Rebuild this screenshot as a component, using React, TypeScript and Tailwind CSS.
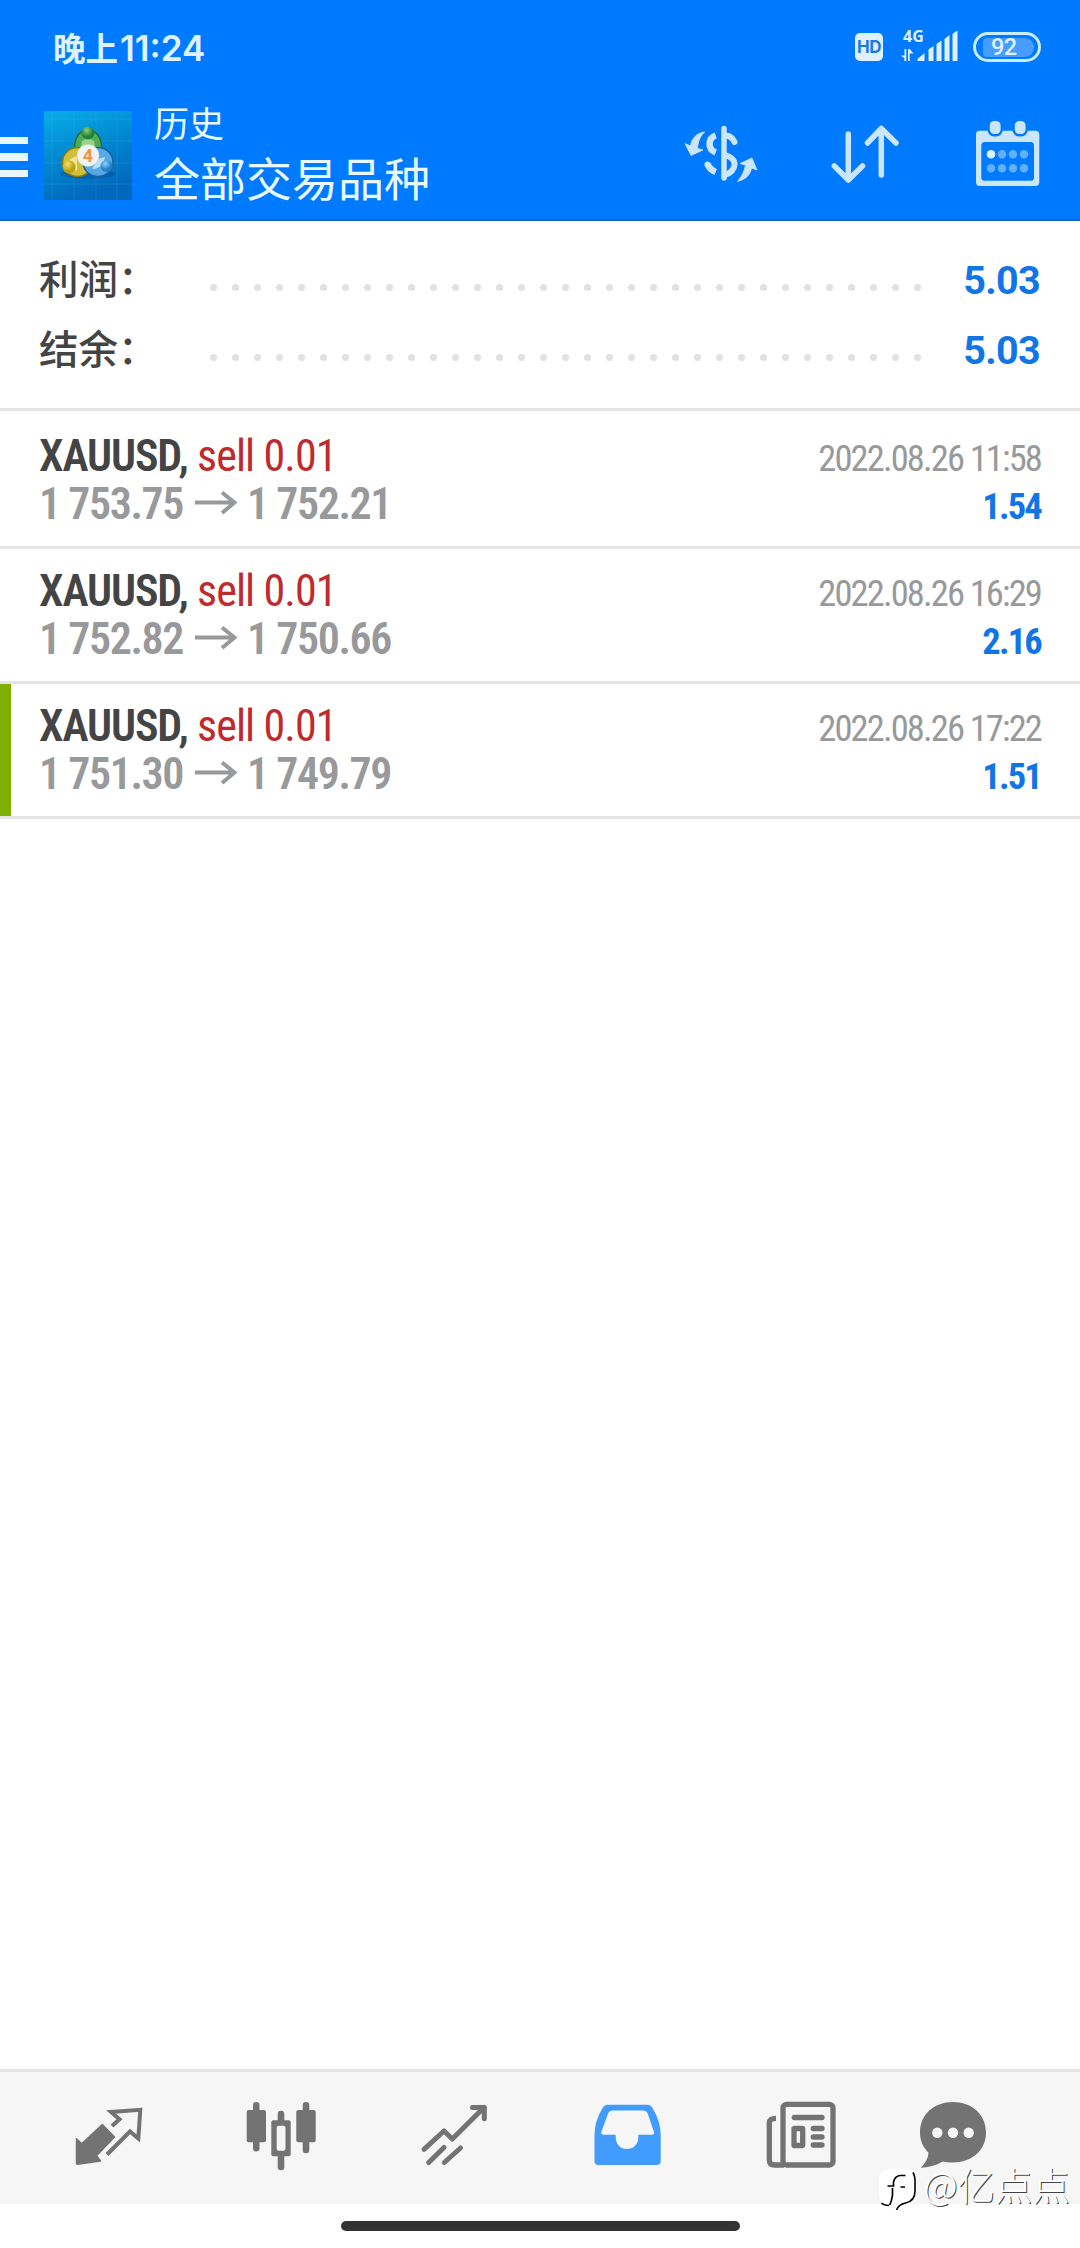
const trades = [
  { symbol: "XAUUSD,", side: "sell 0.01", from: "1 753.75", to: "1 752.21", time: "2022.08.26 11:58", profit: "1.54", marked: false },
  { symbol: "XAUUSD,", side: "sell 0.01", from: "1 752.82", to: "1 750.66", time: "2022.08.26 16:29", profit: "2.16", marked: false },
  { symbol: "XAUUSD,", side: "sell 0.01", from: "1 751.30", to: "1 749.79", time: "2022.08.26 17:22", profit: "1.51", marked: true },
];

const summary = [
  { label: "利润：", value: "5.03" },
  { label: "结余：", value: "5.03" },
];

function StatusBar() {
  return (
    <div className="flex h-[96px] items-start pl-[53px] pr-[39px] text-[#def1ff]">
      <div className="mt-[23px] flex h-[48px] items-baseline leading-[48px]">
        <span className="font-['Noto_Sans_CJK_SC',sans-serif] text-[32.500px] font-bold">晚上</span>
        <span className="ml-[2px] font-['Inter',sans-serif] text-[35px] font-semibold">11:24</span>
      </div>
      <div className="ml-auto mt-[32.500px] flex h-[28px] w-[28px] items-center justify-center rounded-[5px] bg-[#dff1ff] font-['Inter',sans-serif] text-[17px] font-bold leading-[28px] tracking-[-0.500px] text-[#1a78e8]">
        HD
      </div>
      <div className="ml-[17px] mt-[29px] w-[58px]">
        <div className="ml-[3px] h-[14px] font-['Noto_Sans',sans-serif] text-[16px] font-bold leading-[14px]">4G</div>
        <svg className="-mt-[12px] block h-[32px] w-[58px]" viewBox="0 0 58 32" fill="currentColor">
          <path d="M4.500 18H6.300V30H4.300V27L0.500 24.500H4.500zM8 18H9.700L13.500 22.500H9.700V30H8z" />
          <path d="M17.500 28L24.500 22V30H17.500zM28.500 18.500L33.500 15V30H28.500zM36.500 13L41.500 9.500V30H36.500zM44.500 8L49.500 4V30H44.500zM52.500 3L57.500 -0.800V30H52.500z" />
        </svg>
      </div>
      <div className="ml-[15px] mt-[32px] flex h-[30px] w-[68px] items-center rounded-full border-[3px] border-[#c8edff] p-[4px]">
        <div className="ml-[3px] flex h-[19px] w-[52px] items-center rounded-[4px] rounded-r-[9px] bg-[#469dff] pl-[8px] font-['Roboto',sans-serif] text-[23.500px] font-medium leading-[19px] tracking-[-0.500px]">
          92
        </div>
      </div>
    </div>
  );
}

function AppLogo() {
  return (
    <svg className="h-[89px] w-[88px]" viewBox="0 0 88 89">
      <defs>
        <linearGradient id="sky" x1="0" y1="0" x2="0.35" y2="1">
          <stop offset="0" stopColor="#08aee8" />
          <stop offset="0.5" stopColor="#0289d2" />
          <stop offset="1" stopColor="#0169bd" />
        </linearGradient>
        <radialGradient id="green" cx="0.4" cy="0.3">
          <stop offset="0" stopColor="#8fd07a" />
          <stop offset="1" stopColor="#1f8138" />
        </radialGradient>
        <radialGradient id="yellow" cx="0.4" cy="0.3">
          <stop offset="0" stopColor="#f3e46a" />
          <stop offset="1" stopColor="#b9a012" />
        </radialGradient>
        <radialGradient id="blue" cx="0.4" cy="0.3">
          <stop offset="0" stopColor="#8fd4fa" />
          <stop offset="1" stopColor="#2580c8" />
        </radialGradient>
      </defs>
      <rect width="88" height="89" fill="url(#sky)" />
      <path d="M8 0V89M30 0V89M52 0V89M73 0V89M0 8H88M0 30H88M0 52H88M0 73H88" stroke="#6fd0f5" strokeOpacity="0.15" />
      <ellipse cx="44" cy="63" rx="28" ry="5" fill="#04509a" fillOpacity="0.45" />
      <g strokeLinejoin="round">
        <path d="M44 19C53 19 58 28 57.500 38C57 46 50 48 44 48S31 46 30.500 38C30 28 35 19 44 19z" fill="#4fae55" stroke="#22703a" strokeWidth="1.500" />
        <ellipse cx="33.500" cy="51" rx="15" ry="14.500" fill="#cfc03c" stroke="#857717" strokeWidth="1.500" />
        <ellipse cx="54" cy="51" rx="15" ry="14.500" fill="#55a9e4" stroke="#1a5f9f" strokeWidth="1.500" />
        <path d="M38 30Q44 25 50 30L51 36H37z" fill="#b9e4a4" fillOpacity="0.7" />
        <path d="M26 48L33 45V60Q30 56 26 57z" fill="#f4ecaa" fillOpacity="0.800" />
        <path d="M61 46L54 48L48 58Q55 58 59 53z" fill="#cfeaff" fillOpacity="0.800" />
      </g>
      <circle cx="44" cy="22" r="6.500" fill="url(#green)" />
      <circle cx="25" cy="56" r="6.500" fill="url(#yellow)" />
      <circle cx="62.500" cy="55" r="6" fill="url(#blue)" />
      <circle cx="44" cy="44.500" r="11" fill="#f3f4f1" stroke="#c9cfc9" strokeWidth="0.600" />
      <text x="44" y="51" textAnchor="middle" fill="#f3923f" className="font-['Roboto',sans-serif] text-[18px] font-bold">4</text>
    </svg>
  );
}

function Toolbar() {
  return (
    <div className="flex h-[125px] items-start pr-[34px]">
      <div className="mt-[40.500px] flex w-[28px] flex-col gap-[9px]">
        <span className="h-[7.500px] bg-[#e8f6ff]" />
        <span className="h-[7.500px] bg-[#e8f6ff]" />
        <span className="h-[7.500px] bg-[#e8f6ff]" />
      </div>
      <div className="ml-[16px] mt-[15px]">
        <AppLogo />
      </div>
      <div className="ml-[22px] mt-[2px] font-['Noto_Sans_CJK_SC',sans-serif] text-[#e8f8ff]">
        <div className="text-[35px] leading-[48px]">历史</div>
        <div className="text-[46px] leading-[60px]">全部交易品种</div>
      </div>
      <div className="ml-auto mt-[22px] flex gap-[67.500px] text-[#cbe5fb]">
        <svg className="h-[70px] w-[76px]" viewBox="0 0 76 70" fill="none" stroke="currentColor">
          <path d="M41 10.500V60" strokeWidth="5.500" strokeLinecap="round" />
          <path d="M32.700 17.500C25 20 24 31 32.700 34.500" strokeWidth="6.500" />
          <path d="M24.500 46C26 50 29 52.500 32.700 54" strokeWidth="6.500" />
          <circle cx="24.500" cy="46.500" r="3" fill="currentColor" stroke="none" />
          <path d="M43 17.500C48 18 50 20.500 51.500 24" strokeWidth="6" strokeLinecap="round" />
          <path d="M42 37C48.500 39 52 42 51.500 47C51 52 48 55 42 57" strokeWidth="6" />
          <path d="M21.700 14C13 15 8.500 21 7.500 28L2 25.500L8 37.500L20 32L14.500 30.500C15 24 17 18 21.700 14z" fill="currentColor" strokeWidth="0.800" strokeLinejoin="round" />
          <path d="M54.500 63.500C64 61 67.500 56 68.500 50L74 52L69 40L57 45.500L62.500 47C61.500 53 59 58 54.500 63.500z" fill="currentColor" strokeWidth="0.800" strokeLinejoin="round" />
        </svg>
        <svg className="h-[70px] w-[76px]" viewBox="0 0 76 70" fill="none" stroke="currentColor" strokeWidth="5.500" strokeLinecap="round" strokeLinejoin="round">
          <path d="M21.300 16V62M7.300 48L21.300 62L35.500 48" />
          <path d="M54.300 57V10.500M40.500 25L54.300 10.500L69 25" />
        </svg>
        <svg className="h-[70px] w-[76px]" viewBox="0 0 76 70" fill="currentColor">
          <path fillRule="evenodd" d="M9.500 12.700H65.500Q69.300 12.700 69.300 16.500V64Q69.300 68 65.500 68H9.500Q6 68 6 64V16.500Q6 12.700 9.500 12.700zM14.500 24Q11.300 24 11.300 27.500V59.500Q11.300 62.700 14.500 62.700H61Q64 62.700 64 59.500V27.500Q64 24 61 24z" />
          <rect x="19.500" y="3" width="11.300" height="13.500" rx="4.500" stroke="#007aff" strokeWidth="4" />
          <rect x="44.500" y="3" width="11.300" height="13.500" rx="4.500" stroke="#007aff" strokeWidth="4" />
          <rect x="19.800" y="3" width="10.800" height="13" rx="4.500" />
          <rect x="44.800" y="3" width="10.800" height="13" rx="4.500" />
          <g fill="#60b0ff">
            <circle cx="32" cy="36.300" r="4.200" />
            <circle cx="43" cy="36.300" r="4.200" />
            <circle cx="54" cy="36.300" r="4.200" />
            <circle cx="21" cy="50.300" r="4.200" />
            <circle cx="32" cy="50.300" r="4.200" />
            <circle cx="43" cy="50.300" r="4.200" />
            <circle cx="54" cy="50.300" r="4.200" />
          </g>
          <circle cx="21" cy="36.300" r="4.300" fill="#dcf1ff" />
        </svg>
      </div>
    </div>
  );
}

function SummaryRow({ label, value }: { label: string; value: string }) {
  return (
    <div className="flex h-[70px] items-baseline leading-[70px]">
      <span className="w-[171px] font-['Noto_Sans_CJK_SC',sans-serif] text-[39.500px] font-medium text-[#444]">{label}</span>
      <span className="flex w-[711px] translate-y-[-3px] justify-between">
        {Array.from({ length: 33 }, (_, i) => (
          <span key={i} className="h-[7px] w-[7px] rounded-full bg-[#e1e1e1]" />
        ))}
      </span>
      <span className="ml-auto font-['Roboto',sans-serif] text-[39.500px] font-bold tracking-[-0.700px] text-[#1275e6]">{value}</span>
    </div>
  );
}

function TradeRow({ t }: { t: (typeof trades)[number] }) {
  return (
    <div className="flex h-[135px] border-b-[3px] border-[#e4e4e4] font-['Roboto_Condensed',sans-serif]">
      <div className={t.marked ? "w-[11px] bg-[#7fb000]" : "w-[11px]"} />
      <div className="flex-1 pl-[28px] pr-[39px] pt-[18px] leading-[48px]">
        <div className="flex h-[48px] items-baseline">
          <span className="w-[158px] text-[44px] font-semibold tracking-[-1.100px] text-[#444]">{t.symbol}</span>
          <span className="text-[44px] tracking-[-0.900px] text-[#bf2a2d]">{t.side}</span>
          <span className="ml-auto text-[36.500px] tracking-[-1.850px] text-[#98999b]">{t.time}</span>
        </div>
        <div className="flex h-[48px] items-baseline">
          <span className="w-[156px] text-[44px] font-semibold tracking-[-1.450px] text-[#98999b]">{t.from}</span>
          <svg className="h-[28px] w-[42px] translate-y-[-3px]" viewBox="0 0 42 28" fill="none" stroke="#98999b" strokeWidth="4">
            <path d="M0 14.500H39M27 4.500L39.500 14.500L27 25" />
          </svg>
          <span className="ml-[10px] text-[44px] font-semibold tracking-[-1.450px] text-[#98999b]">{t.to}</span>
          <span className="ml-auto text-[36.500px] font-bold tracking-[-1.800px] text-[#1275e6]">{t.profit}</span>
        </div>
      </div>
    </div>
  );
}

function BottomNav() {
  return (
    <div className="flex h-[135px] items-start border-t-[3px] border-[#e4e4e4] bg-[#f6f6f6] pl-[72px] pt-[23px] text-[#737373]">
      <svg className="h-[80px] w-[72px] shrink-0" viewBox="0 0 72 80">
        <path d="M4.500 43.800L9.700 48.800L30.300 29.500L42.500 42L24.500 60.800L28.500 66L5.500 69.300L4.500 68.500z" fill="currentColor" stroke="currentColor" strokeWidth="1.500" strokeLinejoin="round" />
        <path d="M40 31L47.500 24.300L39 17L68.300 14.800L66.300 43.500L58 36.500L35 59.500" fill="none" stroke="currentColor" strokeWidth="4" />
      </svg>
      <svg className="ml-[101px] h-[80px] w-[72px] shrink-0" viewBox="0 0 72 80" fill="currentColor">
        <rect x="8" y="7" width="6.500" height="49.500" rx="3.200" />
        <rect x="1.700" y="15" width="19.300" height="32.300" rx="2" />
        <rect x="32.700" y="15.700" width="6.600" height="59.500" rx="3.200" />
        <rect x="26.300" y="25.300" width="19.400" height="36" rx="2" />
        <rect x="31.700" y="30.700" width="8.800" height="25" rx="2" fill="#f6f6f6" />
        <rect x="57.700" y="7" width="6.600" height="51.300" rx="3.200" />
        <rect x="51.300" y="15" width="19.400" height="32.300" rx="2" />
      </svg>
      <svg className="ml-[101px] h-[80px] w-[72px] shrink-0" viewBox="0 0 72 80" fill="none" stroke="currentColor" strokeWidth="5" strokeLinecap="round" strokeLinejoin="round">
        <path d="M6 54.300L26 36L34.300 44L66 12.500" />
        <path d="M54.500 12.500H66.300V23.700M62 12.500L66.300 17" />
        <path d="M10.700 67.500L26 52.500M26.300 67.500L42.500 53" />
      </svg>
      <svg className="ml-[101px] h-[80px] w-[72px] shrink-0" viewBox="0 0 72 80">
        <path
          fillRule="evenodd"
          fill="#429bff"
          d="M17 9.700H56Q59.500 9.700 61.500 13Q69.700 26.500 69.700 40V66Q69.700 70 65.700 70H7.500Q3.500 70 3.500 66V40Q3.500 26.500 11.500 13Q13.500 9.700 17 9.700zM21.500 15.500Q18.500 15.500 17.300 18L10.300 37Q10 39.700 12.500 39.700H24.700V42C24.700 49.500 29.500 54 36 54S47.300 49.500 47.300 42V39.700H61Q63.500 39.700 63 37L56.500 18Q55.300 15.500 52 15.500z"
        />
      </svg>
      <svg className="ml-[101px] h-[80px] w-[72px] shrink-0" viewBox="0 0 72 80" fill="none" stroke="currentColor" strokeWidth="5.300">
        <rect x="19" y="9.300" width="50" height="60.700" rx="3.500" />
        <path d="M12 23.300Q5.300 23.300 5.300 28V65Q5.300 70 10.500 70H20" />
        <path d="M30.300 22.500H58M49.300 33.500H58M49.300 42H58M49.300 50H58" strokeLinecap="round" />
        <rect x="30" y="33.500" width="8.700" height="17" rx="0.500" />
      </svg>
      <svg className="ml-[81px] h-[80px] w-[72px] shrink-0" viewBox="0 0 72 80">
        <path d="M36 7C54.500 7 69 19 69 37.500C69 55.500 54.500 67.500 36 67.500C32.500 67.500 29 67.300 25.700 66.500C19 70.500 11.500 72.500 3.700 72.700C8.500 68 11.300 63 11.500 57.700C6 52 3 45.500 3 37.500C3 19 17.500 7 36 7z" fill="currentColor" />
        <circle cx="20.300" cy="37.700" r="5.200" fill="#f6f6f6" />
        <circle cx="36" cy="37.700" r="5.200" fill="#f6f6f6" />
        <circle cx="51.700" cy="37.700" r="5.200" fill="#f6f6f6" />
      </svg>
    </div>
  );
}

function Watermark() {
  return (
    <div className="absolute right-[10px] bottom-[40px] flex h-[48px] items-center">
      <svg className="h-[46px] w-[42px] translate-y-[6px]" viewBox="0 0 42 46" fill="none">
        <path d="M12 2H26Q37 2 37 13V24Q37 35 27 37Q20 39 19 43L17 38L4 37V36Q1 32 1 25V13Q1 2 12 2z" fill="#fff" />
        <path d="M35 5.500Q37.500 10 37 17V24Q37 34 27.500 36Q20.500 37.500 18.500 43" stroke="#000" strokeWidth="1.600" />
        <path d="M27.500 8.500H22Q17 9 15.500 15V19H9.500M14.500 21V28Q13.500 35 11.500 38M3.500 36Q6 38.500 11 38.500M22.500 20H27" stroke="#000" strokeWidth="1.700" />
      </svg>
      <span className="ml-[3px] font-['Noto_Sans_CJK_SC',sans-serif] text-[37.500px] font-light leading-[48px] text-white [text-shadow:1px_1px_0_#444]">
        @亿点点
      </span>
    </div>
  );
}

export default function App() {
  return (
    <div className="relative flex h-[2248px] w-[1080px] flex-col overflow-hidden bg-white">
      <header className="h-[221px] border-b-2 border-[#1767bd] bg-[#007aff]">
        <StatusBar />
        <Toolbar />
      </header>
      <section className="h-[190px] border-b-[3px] border-[#e4e4e4] pl-[39px] pr-[40px] pt-[21px]">
        {summary.map((s) => (
          <SummaryRow key={s.label} label={s.label} value={s.value} />
        ))}
      </section>
      <main className="flex-1 pt-[3px]">
        {trades.map((t) => (
          <TradeRow key={t.time} t={t} />
        ))}
      </main>
      <nav>
        <BottomNav />
      </nav>
      <div className="flex h-[44px] justify-center pt-[17px]">
        <div className="h-[10px] w-[399px] rounded-full bg-[#333]" />
      </div>
      <Watermark />
    </div>
  );
}
